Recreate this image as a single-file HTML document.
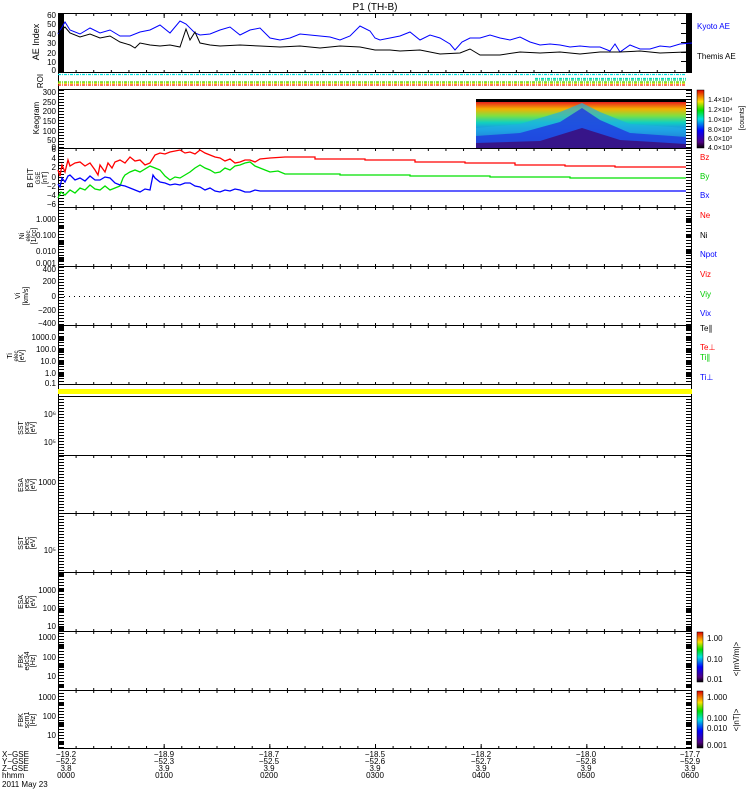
<!DOCTYPE html>
<html><head><meta charset="utf-8"><style>
html,body{margin:0;padding:0;background:#fff;}
svg{display:block;font-family:"Liberation Sans",sans-serif;}
</style></head><body>
<svg width="750" height="800" viewBox="0 0 750 800" xmlns="http://www.w3.org/2000/svg">
<defs>
<pattern id="mnt" patternUnits="userSpaceOnUse" x="58" y="0" width="17.611" height="800"><rect x="0" y="0" width="1" height="800" fill="#000"/></pattern>
<pattern id="mjt" patternUnits="userSpaceOnUse" x="58" y="0" width="105.667" height="800"><rect x="0" y="0" width="1" height="800" fill="#000"/></pattern>
<pattern id="yt" patternUnits="userSpaceOnUse" x="0" y="0" width="10" height="3"><rect x="0" y="0" width="10" height="1" fill="#000"/></pattern>
<linearGradient id="keo" x1="0" y1="0" x2="0" y2="1">
<stop offset="0" stop-color="#e8201c"/><stop offset="0.15" stop-color="#f5b000"/><stop offset="0.3" stop-color="#80e040"/><stop offset="0.45" stop-color="#10d0c0"/><stop offset="0.62" stop-color="#2080f0"/><stop offset="0.8" stop-color="#2020c0"/><stop offset="1" stop-color="#3a0a60"/>
</linearGradient>
<linearGradient id="cb" x1="0" y1="1" x2="0" y2="0">
<stop offset="0" stop-color="#000"/><stop offset="0.1" stop-color="#500080"/><stop offset="0.3" stop-color="#0000ff"/><stop offset="0.5" stop-color="#00e0e0"/><stop offset="0.65" stop-color="#00e000"/><stop offset="0.8" stop-color="#ffe000"/><stop offset="1" stop-color="#e00000"/>
</linearGradient>
</defs>

<text x="375" y="10" font-size="10" text-anchor="middle">P1 (TH-B)</text>

<g fill="none" stroke="#000" stroke-width="1">
<rect x="58.5" y="13.5" width="633" height="735"/>
<line x1="58" y1="72.5" x2="692" y2="72.5"/>
<line x1="58" y1="89.5" x2="692" y2="89.5"/>
<line x1="58" y1="148.5" x2="692" y2="148.5"/>
<line x1="58" y1="207.5" x2="692" y2="207.5"/>
<line x1="58" y1="266.5" x2="692" y2="266.5"/>
<line x1="58" y1="325.5" x2="692" y2="325.5"/>
<line x1="58" y1="384.5" x2="692" y2="384.5"/>
<line x1="58" y1="396.5" x2="692" y2="396.5"/>
<line x1="58" y1="455.5" x2="692" y2="455.5"/>
<line x1="58" y1="513.5" x2="692" y2="513.5"/>
<line x1="58" y1="572.5" x2="692" y2="572.5"/>
<line x1="58" y1="631.5" x2="692" y2="631.5"/>
<line x1="58" y1="690.5" x2="692" y2="690.5"/>
</g>
<rect x="58" y="389" width="634" height="5" fill="#ffff00"/>

<g>
<rect x="58" y="14" width="634" height="2" fill="url(#mnt)"/><rect x="58" y="70" width="634" height="2" fill="url(#mnt)"/>
<rect x="58" y="149" width="634" height="2" fill="url(#mnt)"/><rect x="58" y="205" width="634" height="2" fill="url(#mnt)"/>
<rect x="58" y="208" width="634" height="2" fill="url(#mnt)"/><rect x="58" y="264" width="634" height="2" fill="url(#mnt)"/>
<rect x="58" y="267" width="634" height="2" fill="url(#mnt)"/><rect x="58" y="323" width="634" height="2" fill="url(#mnt)"/>
<rect x="58" y="326" width="634" height="2" fill="url(#mnt)"/><rect x="58" y="382" width="634" height="2" fill="url(#mnt)"/>
<rect x="58" y="456" width="634" height="2" fill="url(#mnt)"/><rect x="58" y="511" width="634" height="2" fill="url(#mnt)"/>
<rect x="58" y="514" width="634" height="2" fill="url(#mnt)"/><rect x="58" y="570" width="634" height="2" fill="url(#mnt)"/>
<rect x="58" y="573" width="634" height="2" fill="url(#mnt)"/><rect x="58" y="629" width="634" height="2" fill="url(#mnt)"/>
<rect x="58" y="632" width="634" height="2" fill="url(#mnt)"/><rect x="58" y="688" width="634" height="2" fill="url(#mnt)"/>
<rect x="58" y="691" width="634" height="2" fill="url(#mnt)"/><rect x="58" y="746" width="634" height="2" fill="url(#mnt)"/>
<rect x="58" y="14" width="634" height="4" fill="url(#mjt)"/><rect x="58" y="744" width="634" height="4" fill="url(#mjt)"/>
</g>

<g fill="url(#yt)">
<rect x="58" y="90" width="6" height="58"/><rect x="686" y="90" width="6" height="58"/>
<rect x="58" y="149" width="6" height="58"/><rect x="686" y="149" width="6" height="58"/>
<rect x="58" y="208" width="6" height="58"/><rect x="686" y="208" width="6" height="58"/>
<rect x="58" y="267" width="6" height="58"/><rect x="686" y="267" width="6" height="58"/>
<rect x="58" y="326" width="6" height="58"/><rect x="686" y="326" width="6" height="58"/>
<rect x="58" y="397" width="6" height="58"/><rect x="686" y="397" width="6" height="58"/>
<rect x="58" y="456" width="6" height="57"/><rect x="686" y="456" width="6" height="57"/>
<rect x="58" y="514" width="6" height="58"/><rect x="686" y="514" width="6" height="58"/>
<rect x="58" y="573" width="6" height="58"/><rect x="686" y="573" width="6" height="58"/>
<rect x="58" y="632" width="6" height="58"/><rect x="686" y="632" width="6" height="58"/>
<rect x="58" y="691" width="6" height="57"/><rect x="686" y="691" width="6" height="57"/>
</g>
<g fill="#000">
<rect x="58" y="225" width="6" height="4"/><rect x="58" y="241" width="6" height="4"/><rect x="58" y="257" width="6" height="4"/>
<rect x="686" y="218" width="6" height="4"/><rect x="686" y="234" width="6" height="4"/><rect x="686" y="250" width="6" height="4"/>
<rect x="58" y="326" width="6" height="4"/><rect x="58" y="337" width="6" height="4"/><rect x="58" y="349" width="6" height="4"/><rect x="58" y="361" width="6" height="4"/><rect x="58" y="373" width="6" height="4"/>
<rect x="686" y="326" width="6" height="4"/><rect x="686" y="337" width="6" height="4"/><rect x="686" y="349" width="6" height="4"/><rect x="686" y="361" width="6" height="4"/><rect x="686" y="373" width="6" height="4"/>
<rect x="58" y="573" width="6" height="3"/><rect x="58" y="588" width="6" height="4"/><rect x="58" y="608" width="6" height="4"/><rect x="58" y="626" width="6" height="4"/>
<rect x="58" y="644" width="6" height="4"/><rect x="58" y="664" width="6" height="4"/><rect x="58" y="684" width="6" height="4"/>
<rect x="58" y="702" width="6" height="4"/><rect x="58" y="722" width="6" height="4"/><rect x="58" y="741" width="6" height="4"/>
<rect x="686" y="608" width="6" height="4"/><rect x="686" y="626" width="6" height="4"/><rect x="686" y="644" width="6" height="4"/><rect x="686" y="664" width="6" height="4"/><rect x="686" y="684" width="6" height="4"/><rect x="686" y="702" width="6" height="4"/><rect x="686" y="722" width="6" height="4"/><rect x="686" y="741" width="6" height="4"/>
</g>

<!-- AE panel -->
<rect x="58" y="13" width="6" height="59" fill="#000"/>
<rect x="686" y="13" width="6" height="59" fill="#000"/>
<g fill="#000"><rect x="681" y="23" width="5" height="1"/><rect x="681" y="33" width="5" height="1"/><rect x="681" y="42" width="5" height="1"/><rect x="681" y="52" width="5" height="1"/><rect x="681" y="61" width="5" height="1"/></g>
<polyline fill="none" stroke="#0000ff" stroke-width="1" points="58,34 65,22 70,30 80,34 90,28 100,33 110,30 120,36 130,36 140,32 150,30 160,25 170,33 180,21 186,24 195,33 200,35 210,34 220,30 230,27 240,35 250,30 260,28 270,38 280,40 290,38 300,34 310,35 320,36 330,37 340,40 350,36 360,26 370,31 375,38 380,40 390,38 400,36 410,32 420,40 430,35 440,38 450,44 455,50 462,42 470,38 480,38 490,35 500,38 510,40 520,37 530,42 540,45 550,44 560,45 570,47 580,46 590,47 600,47 610,51 615,44 620,52 630,45 640,49 650,49 660,46 670,47 680,44 692,43"/>
<polyline fill="none" stroke="#000" stroke-width="1" points="58,33 65,27 70,33 80,37 90,34 100,38 110,36 120,42 130,45 135,48 140,43 150,45 160,46 170,45 180,47 186,29 190,40 195,32 200,43 210,45 220,46 240,45 260,46 280,47 300,46 320,48 340,46 360,47 375,50 390,50 400,51 420,50 440,54 460,53 470,49 480,55 500,55 520,52 540,53 560,52 580,54 600,52 620,52 640,51 660,53 686,52"/>
<g font-size="8" text-anchor="end"><text x="56" y="18">60</text><text x="56" y="27">50</text><text x="56" y="37">40</text><text x="56" y="46">30</text><text x="56" y="56">20</text><text x="56" y="65">10</text><text x="56" y="73">0</text></g>
<text x="697" y="29" font-size="8" fill="#0000ff">Kyoto AE</text>
<text x="697" y="59" font-size="8">Themis AE</text>
<text transform="translate(39,42) rotate(-90)" font-size="9" text-anchor="middle">AE Index</text>

<!-- ROI -->
<g stroke-width="1.2" fill="none">
<line x1="58" y1="74.5" x2="692" y2="74.5" stroke="#00e0e0" stroke-dasharray="3 1 1 1"/>
<line x1="535" y1="78.5" x2="692" y2="78.5" stroke="#00e0c0" stroke-dasharray="3 1 1 1"/>
<line x1="535" y1="80" x2="692" y2="80" stroke="#20d080" stroke-dasharray="3 1 1 1"/>
<line x1="58" y1="82" x2="692" y2="82" stroke="#40d000" stroke-dasharray="3 1 1 1"/>
<line x1="58" y1="83.3" x2="692" y2="83.3" stroke="#e0e000" stroke-dasharray="3 1 1 1"/>
<line x1="58" y1="85" x2="692" y2="85" stroke="#ff2000" stroke-dasharray="3 1 1 1"/>
</g>
<rect x="686" y="73" width="6" height="16" fill="#fff"/>
<text transform="translate(43,81) rotate(-90)" font-size="8" text-anchor="middle">ROI</text>

<!-- Keogram -->
<rect x="476" y="99" width="210" height="3" fill="#000"/>
<rect x="476" y="102" width="210" height="46" fill="url(#keo)"/>
<polygon points="476,128 520,124 560,112 582,103 600,112 630,124 686,128 686,148 476,148" fill="#20b0e0" opacity="0.7"/>
<polygon points="476,136 520,133 560,122 582,108 600,120 630,133 686,137 686,148 476,148" fill="#2040e0" opacity="0.85"/>
<polygon points="476,143 540,141 582,128 620,140 686,144 686,148 476,148" fill="#3a1080" opacity="0.9"/>
<g font-size="8" text-anchor="end"><text x="56" y="95">300</text><text x="56" y="105">250</text><text x="56" y="114">200</text><text x="56" y="124">150</text><text x="56" y="134">100</text><text x="56" y="143">50</text><text x="56" y="150">0</text></g>
<text transform="translate(39,118) rotate(-90)" font-size="8" text-anchor="middle">Keogram</text>
<rect x="697" y="90" width="7" height="58" fill="url(#cb)" stroke="#000" stroke-width="0.5"/>
<g font-size="7"><text x="708" y="102">1.4×10⁴</text><text x="708" y="112">1.2×10⁴</text><text x="708" y="122">1.0×10⁴</text><text x="708" y="132">8.0×10³</text><text x="708" y="141">6.0×10³</text><text x="708" y="150">4.0×10³</text></g>
<text transform="translate(744,118) rotate(-90)" font-size="7" text-anchor="middle">[counts]</text>

<!-- B FIT -->
<polyline fill="none" stroke="#ff0000" stroke-width="1.3" points="58,170 60,176 62,165 65,172 68,160 70,166 75,163 80,162 85,166 90,163 95,170 98,175 100,165 105,172 108,163 112,168 115,162 120,160 125,163 130,157 135,161 140,160 145,165 150,163 155,155 160,153 165,154 170,152 180,150 185,153 190,152 195,154 200,150 205,153 210,155 215,157 220,158 225,161 230,159 235,163 240,162 245,160 250,160 255,162 260,159 270,158 285,157 315,157 315,159 365,159 365,160 415,160 415,162 465,162 465,163 515,163 515,165 565,165 565,166 615,166 615,167 686,167"/>
<polyline fill="none" stroke="#00e000" stroke-width="1.3" points="58,198 61,192 65,195 70,190 75,193 80,188 85,190 90,185 95,189 100,190 105,186 110,190 115,188 120,186 123,178 125,175 130,172 135,170 140,172 150,166 155,168 160,170 165,176 170,180 175,177 180,178 185,175 190,172 195,168 200,165 205,168 210,170 215,173 220,172 225,168 230,170 235,166 240,165 245,163 250,162 255,166 260,168 265,170 270,172 278,171 285,174 340,174 340,175 410,175 410,176 490,176 490,177 570,177 570,178 686,178"/>
<polyline fill="none" stroke="#0000ff" stroke-width="1.3" points="58,184 60,187 62,178 65,182 68,176 70,175 75,180 80,178 85,181 90,176 95,180 100,180 105,177 110,178 115,183 120,185 125,186 130,188 135,190 140,192 145,189 150,190 153,175 155,178 160,182 165,183 170,185 175,184 180,185 185,183 190,183 195,186 200,187 205,190 210,188 215,191 220,192 225,190 230,191 235,189 240,190 245,192 250,192 255,190 260,191 270,191 285,191 686,191"/>
<g font-size="8" text-anchor="end"><text x="56" y="152">6</text><text x="56" y="161">4</text><text x="56" y="170">2</text><text x="56" y="180">0</text><text x="56" y="189">−2</text><text x="56" y="198">−4</text><text x="56" y="207">−6</text></g>
<text transform="translate(33,178) rotate(-90)" font-size="8" text-anchor="middle">B FIT</text>
<text transform="translate(40,178) rotate(-90)" font-size="6" text-anchor="middle">GSE</text>
<text transform="translate(47,178) rotate(-90)" font-size="7" text-anchor="middle">[nT]</text>
<text x="700" y="160" font-size="8" fill="#ff0000">Bz</text>
<text x="700" y="179" font-size="8" fill="#00cc00">By</text>
<text x="700" y="198" font-size="8" fill="#0000ff">Bx</text>

<!-- Ni -->
<g font-size="8" text-anchor="end"><text x="56" y="222">1.000</text><text x="56" y="238">0.100</text><text x="56" y="254">0.010</text><text x="56" y="266">0.001</text></g>
<text transform="translate(24,236) rotate(-90)" font-size="7" text-anchor="middle">Ni</text>
<text transform="translate(20,236) rotate(-90)" font-size="1" text-anchor="middle"> </text>
<text transform="translate(30,236) rotate(-90)" font-size="6" text-anchor="middle">elec</text>
<text transform="translate(36,236) rotate(-90)" font-size="7" text-anchor="middle">[1/cc]</text>
<text x="700" y="218" font-size="8" fill="#ff0000">Ne</text>
<text x="700" y="238" font-size="8">Ni</text>
<text x="700" y="257" font-size="8" fill="#0000ff">Npot</text>

<!-- Vi -->
<line x1="64" y1="296.5" x2="686" y2="296.5" stroke="#000" stroke-dasharray="1 4"/>
<g font-size="8" text-anchor="end"><text x="56" y="272">400</text><text x="56" y="284">200</text><text x="56" y="299">0</text><text x="56" y="313">−200</text><text x="56" y="326">−400</text></g>
<text transform="translate(20,296) rotate(-90)" font-size="7" text-anchor="middle">Vi</text>
<text transform="translate(28,296) rotate(-90)" font-size="7" text-anchor="middle">[km/s]</text>
<text x="700" y="277" font-size="8" fill="#ff0000">Viz</text>
<text x="700" y="297" font-size="8" fill="#00cc00">Viy</text>
<text x="700" y="316" font-size="8" fill="#0000ff">Vix</text>

<!-- Ti -->
<g font-size="8" text-anchor="end"><text x="56" y="340">1000.0</text><text x="56" y="352">100.0</text><text x="56" y="364">10.0</text><text x="56" y="376">1.0</text><text x="56" y="386">0.1</text></g>
<text transform="translate(12,356) rotate(-90)" font-size="7" text-anchor="middle">Ti</text>
<text transform="translate(18,356) rotate(-90)" font-size="6" text-anchor="middle">elec</text>
<text transform="translate(24,356) rotate(-90)" font-size="7" text-anchor="middle">[eV]</text>
<text x="700" y="331" font-size="8">Te∥</text>
<text x="700" y="350" font-size="8" fill="#ff0000">Te⊥</text>
<text x="700" y="360" font-size="8" fill="#00cc00">Ti∥</text>
<text x="700" y="380" font-size="8" fill="#0000ff">Ti⊥</text>

<!-- SST / ESA -->
<g font-size="8" text-anchor="end"><text x="56" y="417">10⁶</text><text x="56" y="445">10⁵</text><text x="56" y="485">1000</text><text x="56" y="553">10⁵</text>
<text x="56" y="593">1000</text><text x="56" y="611">100</text><text x="56" y="629">10</text>
<text x="56" y="640">1000</text><text x="56" y="660">100</text><text x="56" y="679">10</text>
<text x="56" y="700">1000</text><text x="56" y="719">100</text><text x="56" y="738">10</text></g>
<g font-size="7" text-anchor="middle">
<text transform="translate(23,428) rotate(-90)">SST</text><text transform="translate(29,428) rotate(-90)">ions</text><text transform="translate(35,428) rotate(-90)">[eV]</text>
<text transform="translate(23,485) rotate(-90)">ESA</text><text transform="translate(29,485) rotate(-90)">ions</text><text transform="translate(35,485) rotate(-90)">[eV]</text>
<text transform="translate(23,543) rotate(-90)">SST</text><text transform="translate(29,543) rotate(-90)">elec</text><text transform="translate(35,543) rotate(-90)">[eV]</text>
<text transform="translate(23,602) rotate(-90)">ESA</text><text transform="translate(29,602) rotate(-90)">elec</text><text transform="translate(35,602) rotate(-90)">[eV]</text>
<text transform="translate(23,661) rotate(-90)">FBK</text><text transform="translate(29,661) rotate(-90)">edc34</text><text transform="translate(35,661) rotate(-90)">[Hz]</text>
<text transform="translate(23,720) rotate(-90)">FBK</text><text transform="translate(29,720) rotate(-90)">scm1</text><text transform="translate(35,720) rotate(-90)">[Hz]</text>
</g>

<!-- FBK colorbars -->
<rect x="697" y="632" width="6" height="50" fill="url(#cb)" stroke="#000" stroke-width="0.5"/>
<rect x="697" y="691" width="6" height="57" fill="url(#cb)" stroke="#000" stroke-width="0.5"/>
<g font-size="8"><text x="707" y="641">1.00</text><text x="707" y="662">0.10</text><text x="707" y="682">0.01</text>
<text x="707" y="700">1.000</text><text x="707" y="721">0.100</text><text x="707" y="731">0.010</text><text x="707" y="748">0.001</text></g>
<text transform="translate(739,659) rotate(-90)" font-size="8" text-anchor="middle">&lt;|mV/m|&gt;</text>
<text transform="translate(739,720) rotate(-90)" font-size="8" text-anchor="middle">&lt;|nT|&gt;</text>

<!-- bottom labels -->
<g font-size="8">
<text x="2" y="757">X−GSE</text><text x="2" y="764">Y−GSE</text><text x="2" y="771">Z−GSE</text><text x="2" y="778">hhmm</text><text x="2" y="787">2011 May 23</text>
</g>
<g font-size="8" text-anchor="middle">
<text x="66" y="757">−19.2</text><text x="66" y="764">−52.2</text><text x="66" y="771">3.8</text><text x="66" y="778">0000</text>
<text x="164" y="757">−18.9</text><text x="164" y="764">−52.3</text><text x="164" y="771">3.9</text><text x="164" y="778">0100</text>
<text x="269" y="757">−18.7</text><text x="269" y="764">−52.5</text><text x="269" y="771">3.9</text><text x="269" y="778">0200</text>
<text x="375" y="757">−18.5</text><text x="375" y="764">−52.6</text><text x="375" y="771">3.9</text><text x="375" y="778">0300</text>
<text x="481" y="757">−18.2</text><text x="481" y="764">−52.7</text><text x="481" y="771">3.9</text><text x="481" y="778">0400</text>
<text x="586" y="757">−18.0</text><text x="586" y="764">−52.8</text><text x="586" y="771">3.9</text><text x="586" y="778">0500</text>
<text x="690" y="757">−17.7</text><text x="690" y="764">−52.9</text><text x="690" y="771">3.9</text><text x="690" y="778">0600</text>
</g>
</svg>
</body></html>
